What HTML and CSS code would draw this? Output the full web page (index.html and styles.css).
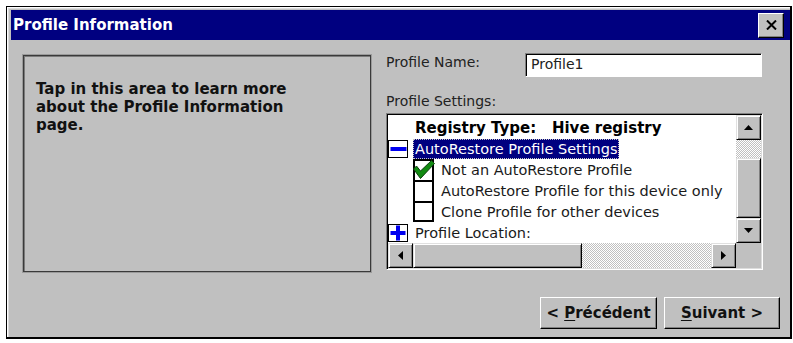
FILE: index.html
```html
<!DOCTYPE html>
<html>
<head>
<meta charset="utf-8">
<title>Profile Information</title>
<link rel="stylesheet" href="styles.css">
</head>
<body>
<div class="window">
  <div class="titlebar">
    <span class="title">Profile Information</span>
    <div class="close-btn">
      <svg width="11" height="10" viewBox="0 0 11 10"><path d="M1 0.5 L10 9.5 M10 0.5 L1 9.5" stroke="#000" stroke-width="2" fill="none"/></svg>
    </div>
  </div>
  <div class="body">
    <div class="top">
      <div class="help">Tap in this area to learn more<br>about the Profile Information<br>page.</div>
      <div class="panel">
        <div class="name-row">
          <span class="name-label">Profile Name:</span>
          <div class="textbox">Profile1</div>
        </div>
        <div class="settings-label">Profile Settings:</div>
        <div class="listbox">
          <div class="tree">
            <div class="row">
              <span class="expander"></span>
              <span class="item bold">Registry Type:   Hive registry</span>
            </div>
            <div class="row">
              <span class="expander">
                <svg width="21" height="19" viewBox="0 0 21 19"><rect x="0.5" y="0.5" width="19" height="17" fill="#fff" stroke="#000"/><rect x="2.5" y="7" width="16" height="4" fill="#0000f0"/></svg>
              </span>
              <span class="item selected">AutoRestore Profile Settings</span>
            </div>
            <div class="row child">
              <span class="expander"></span>
              <span class="checkbox">
                <svg class="check" width="23" height="21" viewBox="0 0 23 21"><polygon points="0.5,9 3.5,6 7.5,11 18.5,0.5 21.5,3.5 7.5,18.5" fill="#118a11" stroke="#0b3d0b" stroke-width="1"/></svg>
              </span>
              <span class="item">Not an AutoRestore Profile</span>
            </div>
            <div class="row child">
              <span class="expander"></span>
              <span class="checkbox"></span>
              <span class="item">AutoRestore Profile for this device only</span>
            </div>
            <div class="row child">
              <span class="expander"></span>
              <span class="checkbox last"></span>
              <span class="item">Clone Profile for other devices</span>
            </div>
            <div class="row">
              <span class="expander">
                <svg width="21" height="19" viewBox="0 0 21 19"><rect x="0.5" y="0.5" width="19" height="17" fill="#fff" stroke="#000"/><rect x="2.5" y="7" width="15" height="4" fill="#0000f0"/><rect x="8" y="1.5" width="4" height="15" fill="#0000f0"/></svg>
              </span>
              <span class="item">Profile Location:</span>
            </div>
          </div>
          <div class="vscroll">
            <div class="sb-btn raised">
              <svg width="9" height="5" viewBox="0 0 9 5"><polygon points="0,5 4.5,0 9,5" fill="#000"/></svg>
            </div>
            <div class="track vtrack-top"></div>
            <div class="raised vthumb"></div>
            <div class="sb-btn raised">
              <svg width="9" height="5" viewBox="0 0 9 5"><polygon points="0,0 4.5,5 9,0" fill="#000"/></svg>
            </div>
          </div>
          <div class="hscroll">
            <div class="sb-btn raised">
              <svg width="5" height="9" viewBox="0 0 5 9"><polygon points="5,0 0,4.5 5,9" fill="#000"/></svg>
            </div>
            <div class="raised hthumb"></div>
            <div class="track htrack"></div>
            <div class="sb-btn raised">
              <svg width="5" height="9" viewBox="0 0 5 9"><polygon points="0,0 5,4.5 0,9" fill="#000"/></svg>
            </div>
          </div>
          <div class="corner"></div>
        </div>
      </div>
    </div>
    <div class="buttons">
      <div class="btn btn-prev"><span>&lt; <u>P</u>récédent</span></div>
      <div class="btn btn-next"><span><u>S</u>uivant &gt;</span></div>
    </div>
  </div>
</div>
</body>
</html>
```

FILE: styles.css
```css
* {
  box-sizing: border-box;
}

html,
body {
  margin: 0;
  padding: 0;
  background: #ffffff;
}

body {
  font-family: "DejaVu Sans", "Liberation Sans", sans-serif;
  font-size: 14px;
  color: #000;
}

.window {
  margin: 6px 0 0 6px;
  width: 786px;
  height: 333px;
  background: #c0c0c0;
  border-style: solid;
  border-color: #000;
  border-width: 1px 2px 2px 1px;
  padding: 3px 0 0 4px;
  display: flex;
  flex-direction: column;
  box-shadow: inset 1px 1px 0 #ffffff, inset 2px 2px 0 #dcdcdc;
}

.titlebar {
  height: 30px;
  flex: none;
  background: #000080;
  color: #fff;
  display: flex;
  align-items: center;
  justify-content: space-between;
  padding: 0 6px 0 2px;
  font-weight: bold;
  font-size: 15px;
}

.close-btn {
  width: 26px;
  height: 25px;
  background: #c0c0c0;
  border: 1px solid;
  border-color: #fff #000 #000 #fff;
  box-shadow: inset -1px -1px 0 #808080;
  display: flex;
  align-items: center;
  justify-content: center;
  padding-bottom: 1px;
}

.body {
  flex: 1;
  display: flex;
  flex-direction: column;
}

.top {
  display: flex;
  gap: 15px;
  padding: 13px 0 0 12px;
}

.help {
  margin-top: 2px;
  width: 348px;
  height: 217px;
  border: 1px solid #3a3a3a;
  box-shadow: inset 1px 1px 0 #7a7a7a, 0 0 0 1px #9a9a9a;
  padding: 24px 0 0 12px;
  font-weight: bold;
  font-size: 15px;
  line-height: 18px;
  color: #111;
}

.panel {
  width: 377px;
}

.name-row {
  display: flex;
  height: 24px;
}

.name-label {
  width: 139px;
  padding-top: 1px;
  line-height: 17px;
  color: #222;
}

.textbox {
  width: 237px;
  height: 24px;
  background: #fff;
  border: 1px solid;
  border-color: #808080 #fff #fff #808080;
  box-shadow: inset 1px 1px 0 #000;
  padding-left: 5px;
  line-height: 21px;
  color: #222;
}

.settings-label {
  margin-top: 16px;
  line-height: 17px;
  color: #222;
}

.listbox {
  margin-top: 3px;
  width: 377px;
  height: 157px;
  border: 1px solid;
  border-color: #808080 #fff #fff #808080;
  box-shadow: inset 1px 1px 0 #000, inset -1px -1px 0 #dcdcdc;
  padding: 1px;
  display: grid;
  grid-template-columns: 348px 25px;
  grid-template-rows: 128px 25px;
}

.tree {
  background: #fff;
  padding-top: 2px;
  overflow: hidden;
  font-size: 14.5px;
  color: #1a1a1a;
}

.row {
  display: flex;
  align-items: center;
  height: 21px;
  white-space: pre;
}

.expander {
  width: 25px;
  height: 21px;
  flex: none;
  display: flex;
  align-items: center;
  padding-top: 2px;
}

.item {
  padding: 0 1px;
  border: 1px solid transparent;
  line-height: 18px;
}

.bold {
  font-weight: bold;
  font-size: 15px;
  color: #000;
}

.selected {
  background: #000080;
  color: #fff;
  border: 1px dotted #c8c8c8;
}

.checkbox {
  position: relative;
  width: 21px;
  height: 21px;
  flex: none;
  border: 2px solid #000;
  border-bottom: 0;
  margin-right: 5px;
}

.checkbox.last {
  border-bottom: 2px solid #000;
}

.check {
  position: absolute;
  left: -2px;
  top: -1px;
}

.vscroll {
  display: flex;
  flex-direction: column;
}

.hscroll {
  display: flex;
}

.raised {
  background: #c0c0c0;
  border: 1px solid;
  border-color: #e0e0e0 #000 #000 #e0e0e0;
  box-shadow: inset 1px 1px 0 #fff, inset -1px -1px 0 #808080;
}

.sb-btn {
  width: 25px;
  height: 25px;
  flex: none;
  display: flex;
  align-items: center;
  justify-content: center;
}

.track {
  background-color: #fff;
  background-image: repeating-conic-gradient(#c0c0c0 0 25%, #ffffff 0 50%);
  background-size: 2px 2px;
}

.vtrack-top {
  height: 18px;
}

.vthumb {
  height: 60px;
}

.hthumb {
  width: 169px;
}

.htrack {
  width: 129px;
}

.corner {
  background: #c0c0c0;
}

.buttons {
  margin-top: auto;
  display: flex;
  justify-content: flex-end;
  gap: 7px;
  padding: 0 10px 8px 0;
}

.btn {
  height: 32px;
  display: flex;
  align-items: center;
  justify-content: center;
  font-weight: bold;
  font-size: 15px;
  background: #c0c0c0;
  border: 1px solid;
  border-color: #fff #000 #000 #fff;
  box-shadow: inset -1px -1px 0 #808080;
  color: #111;
  white-space: pre;
}

.btn-prev {
  width: 117px;
}

.btn-next {
  width: 116px;
}

.btn u {
  text-decoration-thickness: 1px;
  text-underline-offset: 2px;
}
```
